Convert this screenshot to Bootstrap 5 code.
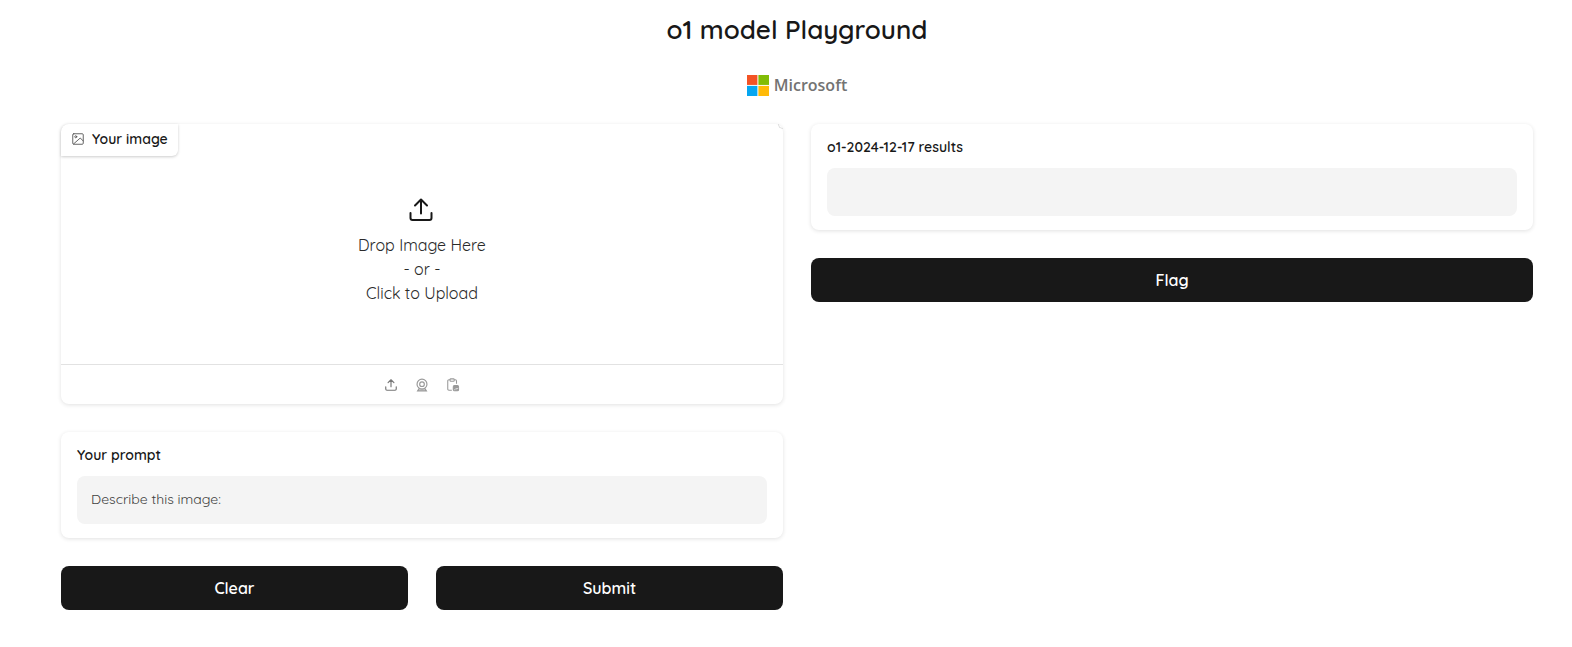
<!DOCTYPE html>
<html lang="en">
<head>
<meta charset="utf-8">
<meta name="viewport" content="width=device-width, initial-scale=1">
<title>o1 model Playground</title>
<link href="https://cdn.jsdelivr.net/npm/bootstrap@5.3.0/dist/css/bootstrap.min.css" rel="stylesheet">
<style>
:root { --ink: #181818; --gap: 28px; }
body { font-family: Quicksand, Lato, sans-serif; color: var(--ink); background: #fff; }
.page { padding: 12px 39px 28px 61px; }
.page-title { font-size: 26px; line-height: 36px; font-weight: 600; margin: 0 0 27px; }
.brand { gap: 5px; height: 21px; margin-bottom: var(--gap); color: #737373; font-family: "Open Sans", sans-serif; font-size: 16px; font-weight: 600; line-height: 21px; }
.columns { --bs-gutter-x: 28px; --bs-gutter-y: 28px; }
.stack { gap: var(--gap); }
.panel { position: relative; background: #fff; border-radius: 8px; box-shadow: 0 1px 4px rgba(0,0,0,.12); }
.corner { position: absolute; top: 0; right: 0; width: 5px; height: 5px; border-bottom: 1px solid #ddd; border-left: 1px solid #ddd; border-bottom-left-radius: 5px; }
.field { padding: 14px 16px; }
.field label { display: block; font-size: 14px; line-height: 18px; margin-bottom: 12px; font-weight: 600; }
.field .form-control { height: 48px; border: 0; border-radius: 8px; background: #f4f4f4; padding: 0 14px 2px; font-size: 14px; color: #404040; }
.btn-ink { height: 44px; border: 0; border-radius: 8px; background: var(--ink); color: #fff; font-size: 16px; font-weight: 600; line-height: 24px; }
.btn-ink:hover { background: #333; color: #fff; }
.tab-label { gap: 8px; height: 32px; padding: 0 10px 2px 11px; font-size: 14px; font-weight: 600; border-radius: 8px 0 6px 0; box-shadow: 0 1px 3px rgba(0,0,0,.2); }
.drop { height: 208px; padding: 42px 0 0; border: 0; background: none; color: #2a2a2a; font-size: 16px; line-height: 24px; font-weight: 400; }
.drop svg { margin-bottom: 11px; color: var(--ink); }
.drop svg { margin-right: 2px; }
.tools { gap: 17px; height: 40px; border-top: 1px solid #e2e2e2; }
.tools button { width: 14px; height: 14px; padding: 0; border: 0; background: none; color: #999; line-height: 0; }
</style>
</head>
<body>
<main class="container-fluid page">
  <h1 class="page-title text-center">o1 model Playground</h1>
  <div class="brand d-flex justify-content-center align-items-center">
    <svg width="22" height="21" viewBox="0 0 22 22" preserveAspectRatio="none" aria-hidden="true"><path fill="#f35325" d="M0 0h10.4v10.4H0z"/><path fill="#81bc06" d="M11.4 0H22v10.4H11.4z"/><path fill="#05a6f0" d="M0 11.4h10.4V22H0z"/><path fill="#ffba08" d="M11.4 11.4H22V22H11.4z"/></svg>
    <span>Microsoft</span>
  </div>
  <div class="row columns">
    <div class="col-12 col-md-6 d-flex flex-column stack">
      <section class="panel">
        <span class="corner"></span>
        <div class="d-flex">
          <div class="tab-label d-flex align-items-center">
            <svg width="12" height="12" viewBox="0 0 24 24" fill="none" stroke="#555" stroke-width="1.8" stroke-linecap="round" stroke-linejoin="round" aria-hidden="true"><rect x="1.5" y="1.5" width="21" height="21" rx="2"/><circle cx="7.5" cy="7.5" r="2"/><path d="M22.5 16l-6-6L3 22"/></svg>
            <span>Your image</span>
          </div>
        </div>
        <button type="button" class="drop w-100 d-flex flex-column align-items-center">
          <svg width="24" height="24" viewBox="0 0 24 24" fill="none" stroke="currentColor" stroke-width="2" stroke-linecap="round" stroke-linejoin="round" aria-hidden="true"><path d="M1.500 15v5a2 2 0 0 0 2 2h17a2 2 0 0 0 2-2V15M6 7.500l6-6 6 6M12 2v13.500"/></svg>
          <span>Drop Image Here</span>
          <span>- or -</span>
          <span>Click to Upload</span>
        </button>
        <div class="tools d-flex justify-content-center align-items-center">
          <button type="button" aria-label="Upload file"><svg width="14" height="14" viewBox="0 0 24 24" fill="none" stroke="#777" stroke-width="2" stroke-linecap="round" stroke-linejoin="round"><path d="M3 15v4a2 2 0 0 0 2 2h14a2 2 0 0 0 2-2v-4M7 8l5-5 5 5M12 3v12"/></svg></button>
          <button type="button" aria-label="Webcam"><svg width="14" height="14" viewBox="0 0 24 24" fill="none" stroke="currentColor" stroke-width="2"><circle cx="12" cy="10.500" r="8.500"/><circle cx="12" cy="10.500" r="4"/><path d="M7 18l-2.500 4h15L17 18" fill="currentColor" fill-opacity=".5"/></svg></button>
          <button type="button" aria-label="Paste from clipboard"><svg width="14" height="14" viewBox="0 0 24 24" fill="none" stroke="currentColor" stroke-width="1.800" stroke-linejoin="round"><path d="M10 21H5a2 2 0 0 1-2-2V5a2 2 0 0 1 2-2h2M14 3h2a2 2 0 0 1 2 2v5"/><rect x="7" y="1.500" width="7" height="4" rx="1"/><rect x="12.500" y="13" width="9" height="9" rx="2" fill="currentColor"/><path d="M14 21l3-3 2 1 2-2" stroke="#fff" stroke-width="1.200"/></svg></button>
        </div>
      </section>
      <section class="panel field">
        <label for="prompt">Your prompt</label>
        <input id="prompt" class="form-control" type="text" value="Describe this image:">
      </section>
      <div class="d-flex stack">
        <button type="button" class="btn btn-ink flex-fill w-50">Clear</button>
        <button type="button" class="btn btn-ink flex-fill w-50">Submit</button>
      </div>
    </div>
    <div class="col-12 col-md-6 d-flex flex-column stack">
      <section class="panel field">
        <label for="results">o1-2024-12-17 results</label>
        <input id="results" class="form-control" type="text" readonly>
      </section>
      <button type="button" class="btn btn-ink w-100">Flag</button>
    </div>
  </div>
</main>
<script src="https://cdn.jsdelivr.net/npm/bootstrap@5.3.0/dist/js/bootstrap.bundle.min.js"></script>
</body>
</html>
